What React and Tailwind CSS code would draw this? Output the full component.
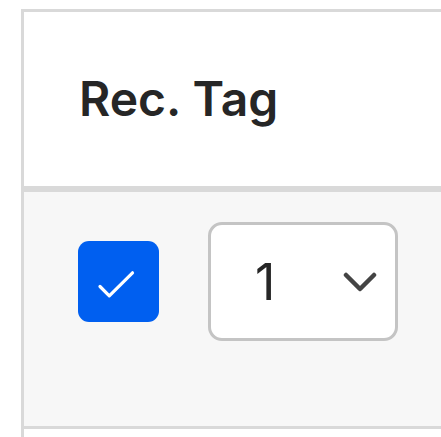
import React, { useState } from "react";

const App = () => {
  const [checked, setChecked] = useState(true);

  return (
    <div
      className="w-screen h-screen overflow-hidden bg-white pl-[21px] pt-[9px] flex"
      style={{ fontFamily: "Inter, 'Liberation Sans', sans-serif" }}
    >
      <div className="shrink-0 w-[700px] border-t-[3px] border-l-[3px] border-[#d9d9d9]">
        {/* header */}
        <div className="h-[180px] flex items-center pl-[55px] border-b-[6px] border-[#d9d9d9]">
          <h2 className="text-[48px] font-semibold text-[#262626] leading-none">
            Rec. Tag
          </h2>
        </div>
        {/* row */}
        <div className="h-[237px] bg-[#f7f7f7] border-b-[3px] border-[#d9d9d9] pl-[54px] pt-[30px]">
          <div className="flex items-center gap-[49px]">
            <button
              onClick={() => setChecked(!checked)}
              className={`w-[81px] h-[81px] rounded-[11px] ${
                checked ? "bg-[#005ff0]" : "bg-white border-[3px] border-[#c4c4c4]"
              }`}
            >
              {checked && (
                <svg width="81" height="81" viewBox="0 0 81 81" fill="none">
                  <path
                    d="M22 45.5 L31.3 54.8 L54.5 31.8"
                    stroke="white"
                    strokeWidth="3.2"
                    strokeLinecap="round"
                    strokeLinejoin="round"
                  />
                </svg>
              )}
            </button>
            <div className="w-[190px] h-[119px] border-[3px] border-[#c4c4c4] rounded-[14px] bg-white flex items-center justify-between pl-[44px] pr-[18px]">
              <span className="text-[50px] text-[#262626] leading-none">1</span>
              <svg width="34" height="20" viewBox="0 0 34 20" fill="none">
                <path
                  d="M3 3 L17 17 L31 3"
                  stroke="#444444"
                  strokeWidth="4.5"
                  strokeLinecap="round"
                  strokeLinejoin="round"
                />
              </svg>
            </div>
          </div>
        </div>
      </div>
    </div>
  );
};

export default App;
